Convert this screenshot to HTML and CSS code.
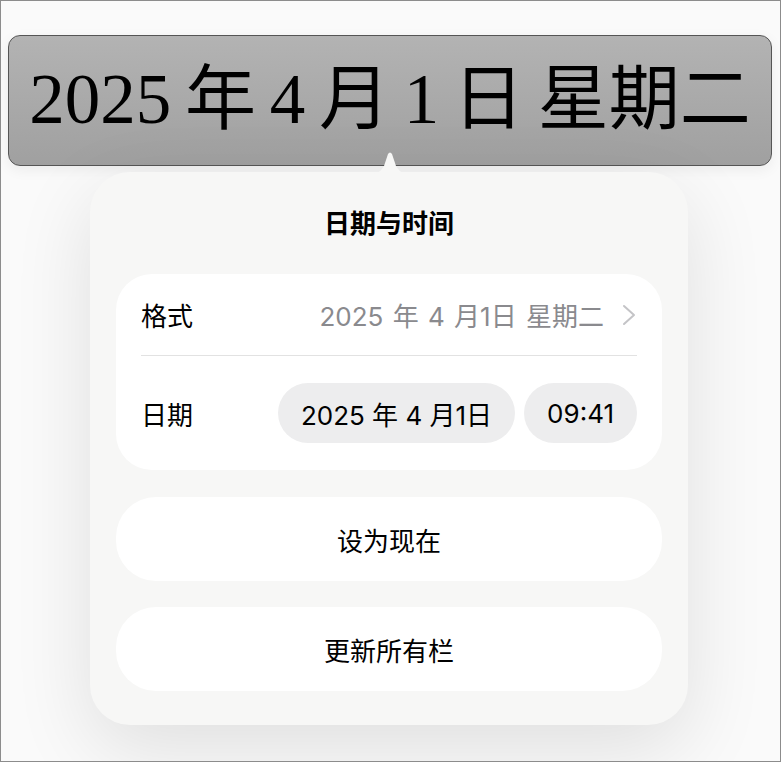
FILE: index.html
```html
<!DOCTYPE html>
<html lang="zh-CN">

<head>
  <meta charset="UTF-8">
  <meta name="viewport" content="width=device-width, initial-scale=1.0">
  <title>日期与时间</title>
  <link rel="stylesheet" href="styles.css">
</head>

<body>
  <div class="frame">
    <div class="field">
      <span class="field-text">2025 年 4 月 1 日 星期二</span>
    </div>

    <div class="popover">
      <svg class="arrow" width="40" height="23" viewBox="0 0 40 23">
        <path d="M0 23 C8 23 11 20 14 15 L18 3 Q20 0 22 3 L26 15 C29 20 32 23 40 23 Z" fill="#f7f7f6" />
      </svg>

      <div class="popover-title">日期与时间</div>

      <div class="group">
        <div class="row row-format">
          <span>格式</span>
          <span class="value">
            <span class="value-text">2025 年 4 月1日 星期二</span>
            <svg class="chevron" width="14" height="22" viewBox="0 0 14 22">
              <path d="M2 2 L12 11 L2 20" fill="none" stroke="#c4c4c7" stroke-width="2" stroke-linecap="round" stroke-linejoin="round" />
            </svg>
          </span>
        </div>
        <div class="sep"></div>
        <div class="row row-date">
          <span>日期</span>
          <div class="pills">
            <span class="pill">2025 年 4 月1日</span>
            <span class="pill">09:41</span>
          </div>
        </div>
      </div>

      <div class="action">设为现在</div>
      <div class="action action-last">更新所有栏</div>
    </div>
  </div>
</body>

</html>
```

FILE: styles.css
```css
body {
  box-sizing: border-box;
  margin: 0px;
  padding: 0px;
  font-family: Inter, "Noto Sans CJK SC", sans-serif;
  color: #000;
}

.frame {
  box-sizing: border-box;
  width: 781px;
  height: 762px;
  border: 1px solid #8c8c8c;
  background-color: #fafafa;
  overflow: hidden;
}

/* text field at the top */
.field {
  box-sizing: border-box;
  display: flex;
  justify-content: center;
  align-items: center;
  margin: 34px 8px 0px 7px;
  height: 131px;
  border: 1px solid #555;
  border-radius: 12px;
  background: linear-gradient(#b3b3b3, #a0a0a0);
  box-shadow: 0px 4px 14px rgba(0, 0, 0, 0.06);
}

.field-text {
  font-family: "Liberation Serif", "Noto Sans CJK SC", serif;
  font-size: 71px;
  word-spacing: -4px;
  line-height: 1;
  padding-bottom: 2px;
}

/* popover */
.popover {
  position: relative;
  box-sizing: border-box;
  width: 598px;
  margin: 6px 0px 0px 89px;
  padding: 0px 26px 34px;
  border-radius: 40px;
  background-color: #f7f7f6;
  box-shadow: 0px 24px 80px rgba(0, 0, 0, 0.11);
}

.arrow {
  position: absolute;
  top: -21px;
  left: 280px;
}

.popover-title {
  box-sizing: border-box;
  display: flex;
  justify-content: center;
  align-items: center;
  height: 102px;
  padding-bottom: 4px;
  font-size: 26px;
  font-weight: 700;
}

.group {
  background-color: #fff;
  border-radius: 36px;
  padding: 0px 25px;
}

.row {
  display: flex;
  justify-content: space-between;
  align-items: center;
  font-size: 26px;
}

.row-format {
  height: 81px;
}

.value {
  display: flex;
  align-items: center;
  gap: 18px;
  color: #8a8a8e;
}

.value-text {
  word-spacing: 2px;
}

.chevron {
  margin-right: 1px;
}

.sep {
  height: 1px;
  background-color: #e2e2e2;
}

.row-date {
  padding: 27px 0px;
}

.pills {
  display: flex;
  gap: 9px;
}

.pill {
  display: flex;
  align-items: center;
  height: 60px;
  padding: 0px 23px;
  border-radius: 30px;
  background-color: #ededee;
}

.action {
  display: flex;
  justify-content: center;
  align-items: center;
  height: 84px;
  margin-top: 27px;
  border-radius: 40px;
  background-color: #fff;
  font-size: 26px;
}

.action-last {
  margin-top: 26px;
}
```
